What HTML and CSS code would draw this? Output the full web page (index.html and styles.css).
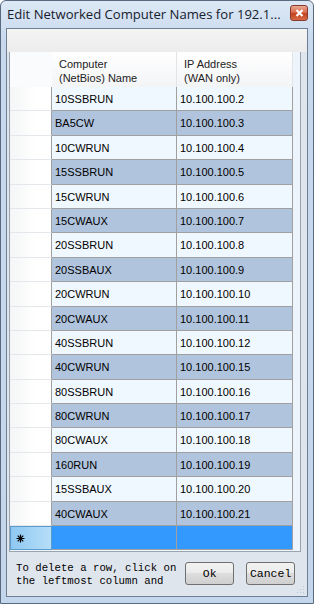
FILE: index.html
```html
<!DOCTYPE html>
<html lang="en">
<head>
  <meta charset="UTF-8">
  <title>Edit Networked Computer Names</title>
  <link rel="stylesheet" href="styles.css">
</head>
<body>
  <div class="window">
    <div class="titlebar">
      <span class="title">Edit Networked Computer Names for 192.1...</span>
      <span class="close">
        <svg width="9" height="8" viewBox="0 0 9 8"><path d="M1.5 1 L7.5 7 M7.5 1 L1.5 7" stroke="#fff" stroke-width="2.2"/></svg>
      </span>
    </div>

    <div class="client">
      <div class="toolbar"></div>

      <div class="grid">
        <div class="row head">
          <div class="rh"></div>
          <div class="ch">Computer<br>(NetBios) Name</div>
          <div class="ch">IP Address<br>(WAN only)</div>
        </div>
        <div class="row"><div class="rh"></div><div class="cell">10SSBRUN</div><div class="cell">10.100.100.2</div></div>
        <div class="row alt"><div class="rh"></div><div class="cell">BA5CW</div><div class="cell">10.100.100.3</div></div>
        <div class="row"><div class="rh"></div><div class="cell">10CWRUN</div><div class="cell">10.100.100.4</div></div>
        <div class="row alt"><div class="rh"></div><div class="cell">15SSBRUN</div><div class="cell">10.100.100.5</div></div>
        <div class="row"><div class="rh"></div><div class="cell">15CWRUN</div><div class="cell">10.100.100.6</div></div>
        <div class="row alt"><div class="rh"></div><div class="cell">15CWAUX</div><div class="cell">10.100.100.7</div></div>
        <div class="row"><div class="rh"></div><div class="cell">20SSBRUN</div><div class="cell">10.100.100.8</div></div>
        <div class="row alt"><div class="rh"></div><div class="cell">20SSBAUX</div><div class="cell">10.100.100.9</div></div>
        <div class="row"><div class="rh"></div><div class="cell">20CWRUN</div><div class="cell">10.100.100.10</div></div>
        <div class="row alt"><div class="rh"></div><div class="cell">20CWAUX</div><div class="cell">10.100.100.11</div></div>
        <div class="row"><div class="rh"></div><div class="cell">40SSBRUN</div><div class="cell">10.100.100.12</div></div>
        <div class="row alt"><div class="rh"></div><div class="cell">40CWRUN</div><div class="cell">10.100.100.15</div></div>
        <div class="row"><div class="rh"></div><div class="cell">80SSBRUN</div><div class="cell">10.100.100.16</div></div>
        <div class="row alt"><div class="rh"></div><div class="cell">80CWRUN</div><div class="cell">10.100.100.17</div></div>
        <div class="row"><div class="rh"></div><div class="cell">80CWAUX</div><div class="cell">10.100.100.18</div></div>
        <div class="row alt"><div class="rh"></div><div class="cell">160RUN</div><div class="cell">10.100.100.19</div></div>
        <div class="row"><div class="rh"></div><div class="cell">15SSBAUX</div><div class="cell">10.100.100.20</div></div>
        <div class="row alt"><div class="rh"></div><div class="cell">40CWAUX</div><div class="cell">10.100.100.21</div></div>
        <div class="row newrow">
          <div class="rh">
            <svg width="9" height="9" viewBox="0 0 9 9"><path d="M4.5 0.5 V8.5 M0.5 4.5 H8.5 M1.7 1.7 L7.3 7.3 M7.3 1.7 L1.7 7.3" stroke="#000" stroke-width="1.2"/></svg>
          </div>
          <div class="cell"></div><div class="cell"></div>
        </div>
      </div>

      <div class="footer">
        <p class="hint">To delete a row, click on<br>the leftmost column and</p>
        <button class="btn">Ok</button>
        <button class="btn">Cancel</button>
      </div>
      <svg class="grip" width="8" height="8" viewBox="0 0 8 8">
        <rect x="6" y="0" width="1" height="1" fill="#b8c4d2"/>
        <rect x="3" y="3" width="1" height="1" fill="#b8c4d2"/>
        <rect x="6" y="3" width="1" height="1" fill="#b8c4d2"/>
        <rect x="0" y="6" width="1" height="1" fill="#b8c4d2"/>
        <rect x="3" y="6" width="1" height="1" fill="#b8c4d2"/>
        <rect x="6" y="6" width="1" height="1" fill="#b8c4d2"/>
      </svg>
    </div>
  </div>
</body>
</html>
```

FILE: styles.css
```css
/* dialog */
body {
  margin: 0;
  background: #fff;
  font-family: "Liberation Sans", Arial, sans-serif;
}

.window {
  width: 314px;
  height: 604px;
  box-sizing: border-box;
  border: 1px solid #5a6a7e;
  border-radius: 6px 6px 0 0;
  background: linear-gradient(#dce8f5, #c8d9ee 40px, #c4d6ec);
  padding: 0 5px 6px 5px;
  display: flex;
  flex-direction: column;
}

.titlebar {
  height: 27px;
  display: flex;
  align-items: center;
  justify-content: space-between;
}

.title {
  font-family: "Open Sans", "Noto Sans", sans-serif;
  font-size: 13.1px;
  color: #16202c;
  padding-left: 1px;
  margin-top: -1px;
  white-space: nowrap;
}

.close {
  width: 18px;
  height: 16px;
  margin-top: -3px;
  box-sizing: border-box;
  border: 1px solid #8a3a2c;
  border-radius: 3px;
  background: linear-gradient(#eaa993, #da6c50 45%, #c4421f 55%, #d66c48);
  display: flex;
  align-items: center;
  justify-content: center;
}

/* client area */
.client {
  flex: 1;
  position: relative;
  border: 1px solid #6f7f92;
  background: #dfe5ed;
  display: flex;
  flex-direction: column;
}

.toolbar {
  height: 23px;
  background: linear-gradient(#f4f4f4, #ececec);
}

.grid {
  margin: 0 6px 0 2px;
  height: 500px;
  box-sizing: border-box;
  border: 1px solid #9aa4ae;
  border-top: none;
  background: #edf4fb;
}

.row {
  display: flex;
  height: 24.4px;
}

.row .rh {
  width: 42px;
  box-sizing: border-box;
  border-bottom: 1px solid #e4e8ec;
  border-right: 1px solid #a0a0a0;
  background: linear-gradient(90deg, #f4f5f6, #ffffff 60%);
}

.cell {
  box-sizing: border-box;
  border-right: 1px solid #a0a0a0;
  border-bottom: 1px solid #a0a0a0;
  font-size: 11px;
  color: #000;
  padding-left: 3px;
  line-height: 24px;
  background: #f0f8ff;
}

.cell:nth-child(2),
.ch:nth-child(2) {
  width: 125px;
}

.cell:nth-child(3),
.ch:nth-child(3) {
  width: 116px;
}

.alt .cell {
  background: #b0c4de;
}

.head {
  height: 35px;
}

.head .rh {
  border-right: none;
  border-bottom: none;
  background: #fafbfc;
}

.ch {
  box-sizing: border-box;
  border-right: 1px solid #e2e4e8;
  background: linear-gradient(#ffffff, #f3f4f6);
  font-size: 11px;
  color: #222;
  line-height: 14px;
  padding: 5px 0 0 7px;
}

.newrow .cell {
  background: #3399ff;
}

.newrow .rh {
  background: linear-gradient(90deg, #8ec8f2, #b6def8);
  border: 1px solid #5c9ccc;
  display: flex;
  align-items: center;
  padding-left: 5px;
}

/* bottom */
.footer {
  flex: 1;
  display: flex;
  align-items: flex-start;
  padding: 10px 0 0 9px;
}

.hint {
  margin: 0;
  font-family: "Liberation Mono", "Courier New", monospace;
  font-size: 10.7px;
  line-height: 13px;
  color: #000;
  width: 170px;
}

.btn {
  width: 49px;
  height: 23px;
  margin-top: 0;
  margin-right: 12px;
  padding: 0;
  border: 1px solid #707070;
  border-radius: 3px;
  background: linear-gradient(#f2f2f2, #ebebeb 50%, #dddddd 50%, #cfcfcf);
  font-family: "Liberation Mono", "Courier New", monospace;
  font-size: 11.5px;
  color: #000;
}

.grip {
  position: absolute;
  right: 2px;
  bottom: 2px;
}
```
